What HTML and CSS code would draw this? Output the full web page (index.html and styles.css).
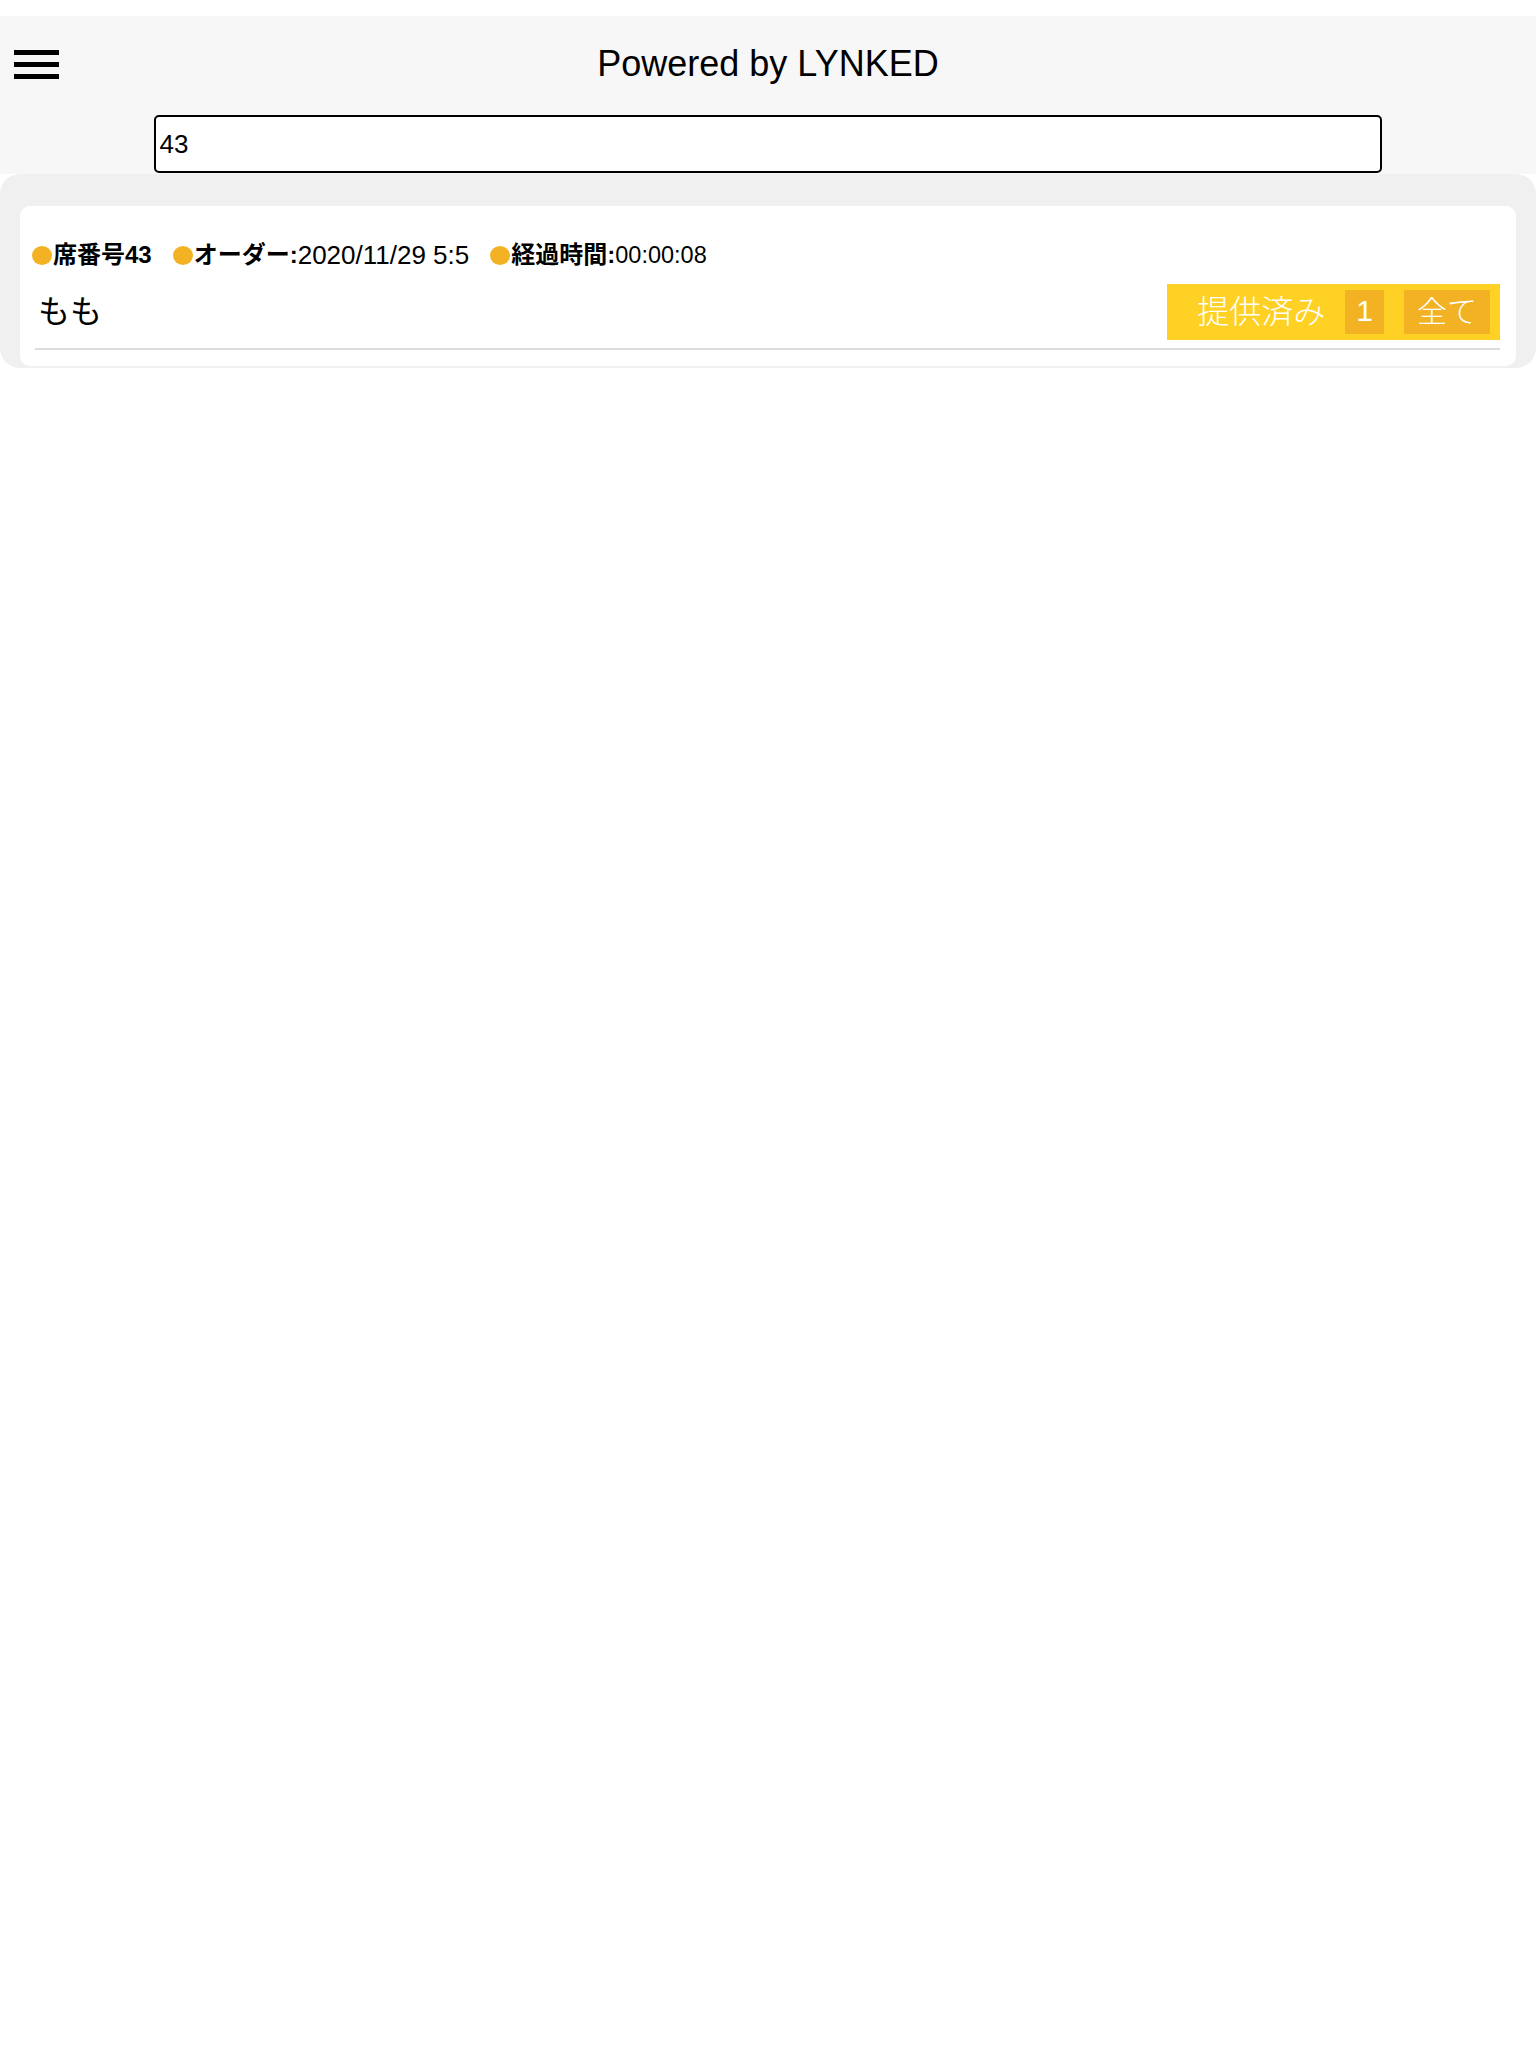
FILE: index.html
```html
<!DOCTYPE html>
<html lang="ja">
<head>
<meta charset="utf-8">
<title>Powered by LYNKED</title>
<link rel="stylesheet" href="styles.css">
</head>
<body>
  <header class="header">
    <div class="header-bar">
      <button class="menu-btn" aria-label="menu">
        <span class="menu-line"></span>
        <span class="menu-line"></span>
        <span class="menu-line"></span>
      </button>
      <h1 class="title">Powered by LYNKED</h1>
      <div class="spacer"></div>
    </div>
    <div class="search">
      <input class="search-input" type="text" value="43">
    </div>
  </header>

  <main class="panel">
    <section class="card">
      <div class="info">
        <span class="info-item"><span class="dot"></span><b class="label">席番号43</b></span>
        <span class="info-item"><span class="dot"></span><b class="label">オーダー:</b><span class="date">2020/11/29 5:5</span></span>
        <span class="info-item"><span class="dot"></span><b class="label">経過時間:</b><span class="elapsed">00:00:08</span></span>
      </div>
      <div class="item-row">
        <span class="item-name">もも</span>
        <div class="served">
          <span class="served-label">提供済み</span>
          <span class="served-box">1</span>
          <span class="served-box served-box-wide">全て</span>
        </div>
      </div>
      <div class="divider"></div>
    </section>
  </main>
</body>
</html>
```

FILE: styles.css
```css
* {
  box-sizing: border-box;
}

html, body {
  margin: 0;
  background: #ffffff;
}

body {
  padding-top: 16px;
  font-family: "Liberation Sans", "Noto Sans CJK JP", sans-serif;
  color: #000;
}

.header {
  background: #f7f7f7;
  padding: 20px 0 1px;
}

.header-bar {
  display: grid;
  grid-template-columns: 1fr auto 1fr;
  align-items: center;
  height: 56px;
}

.menu-btn {
  justify-self: start;
  margin-left: 14px;
  padding: 0;
  border: none;
  background: transparent;
  display: flex;
  flex-direction: column;
  gap: 7px;
  width: 45px;
}

.menu-line {
  display: block;
  width: 45px;
  height: 5px;
  background: #000;
}

.title {
  margin: 0;
  font-size: 36px;
  font-weight: normal;
  line-height: 40px;
}

.search {
  display: flex;
  justify-content: center;
  margin-top: 23px;
}

.search-input {
  width: 80%;
  height: 58px;
  border: 2px solid #000;
  border-radius: 5px;
  background: #fff;
  padding: 0 4px;
  font-family: "Liberation Sans", sans-serif;
  font-size: 26px;
  color: #000;
  outline: none;
}

.panel {
  display: block;
  background: #f0f0f0;
  border-radius: 20px;
  padding: 32px 20px 2px;
}

.card {
  background: #fff;
  border-radius: 10px;
  padding: 34px 16px 16px 12px;
}

.info {
  display: flex;
  align-items: center;
  gap: 21px;
  height: 30px;
  line-height: 30px;
  font-size: 24px;
}

.info-item {
  display: flex;
  align-items: center;
  white-space: nowrap;
}

.dot {
  display: inline-block;
  width: 20px;
  height: 19px;
  border-radius: 50%;
  background: #f3b224;
  margin-right: 1px;
}

.label {
  font-weight: bold;
}

.date {
  font-size: 26px;
}

.elapsed {
  font-size: 23.5px;
}

.item-row {
  display: flex;
  align-items: center;
  justify-content: space-between;
  margin: 14px 0 0 3px;
}

.item-name {
  padding: 0 0 6px 3px;
  font-size: 32px;
  font-family: "Noto Sans CJK JP", sans-serif;
  font-weight: 400;
}

.served {
  display: flex;
  align-items: center;
  gap: 20px;
  height: 56px;
  padding: 0 10px 0 30px;
  background: #ffd124;
  color: #fff;
  font-family: "Noto Sans CJK JP", sans-serif;
  font-weight: 300;
}

.served-label {
  font-size: 32px;
  line-height: 44px;
  padding-bottom: 6px;
}

.served-box {
  display: flex;
  align-items: center;
  justify-content: center;
  height: 44px;
  padding: 0 11px 2px;
  background: #f3b224;
  font-size: 30px;
  font-family: "Liberation Sans", "Noto Sans CJK JP", sans-serif;
}

.served-box-wide {
  padding: 0 13px 6px;
  font-family: "Noto Sans CJK JP", sans-serif;
}

.divider {
  height: 2px;
  margin: 8px 0 0 3px;
  background: #dddddd;
}
```
